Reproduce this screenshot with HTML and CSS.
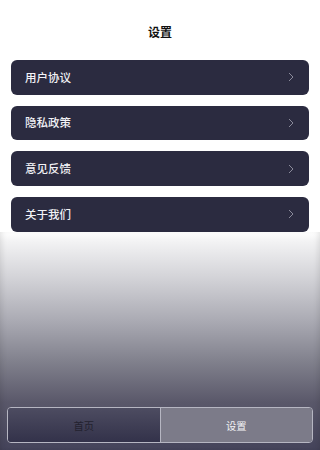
FILE: index.html
```html
<!DOCTYPE html>
<html lang="zh">
<head>
<meta charset="utf-8">
<meta name="viewport" content="width=device-width, initial-scale=1">
<title>设置</title>
<link rel="stylesheet" href="styles.css">
</head>
<body>
<div class="page">
  <header class="header"><h1 class="title">设置</h1></header>
  <ul class="menu">
    <li class="item"><span class="label">用户协议</span><svg class="chev" viewBox="0 0 6 10" width="6" height="10"><path d="M1 1 L5 5 L1 9" fill="none" stroke="#8a8a9a" stroke-width="1"/></svg></li>
    <li class="item"><span class="label">隐私政策</span><svg class="chev" viewBox="0 0 6 10" width="6" height="10"><path d="M1 1 L5 5 L1 9" fill="none" stroke="#8a8a9a" stroke-width="1"/></svg></li>
    <li class="item"><span class="label">意见反馈</span><svg class="chev" viewBox="0 0 6 10" width="6" height="10"><path d="M1 1 L5 5 L1 9" fill="none" stroke="#8a8a9a" stroke-width="1"/></svg></li>
    <li class="item"><span class="label">关于我们</span><svg class="chev" viewBox="0 0 6 10" width="6" height="10"><path d="M1 1 L5 5 L1 9" fill="none" stroke="#8a8a9a" stroke-width="1"/></svg></li>
  </ul>
  <div class="bottom">
    <nav class="tabbar">
      <div class="tab tab-home">首页</div>
      <div class="tab tab-active">设置</div>
    </nav>
  </div>
</div>
</body>
</html>
```
FILE: styles.css
```css
* { box-sizing: border-box; }
html, body { margin: 0; padding: 0; }
body {
  font-family: "Noto Sans CJK SC", "Noto Sans", sans-serif;
  background: #fff;
}
.page {
  width: 100%;
  height: 100vh;
  min-height: 450px;
  display: flex;
  flex-direction: column;
}
.header {
  height: 60px;
  padding-top: 4px;
  display: flex;
  align-items: center;
  justify-content: center;
}
.title {
  margin: 0;
  font-size: 12px;
  font-weight: 700;
  color: #111;
  line-height: 1;
}
.menu {
  list-style: none;
  margin: 0;
  padding: 0 11px;
  display: flex;
  flex-direction: column;
  gap: 11.2px;
}
.item {
  height: 34.5px;
  background: #2b2b40;
  border-radius: 6px;
  display: flex;
  align-items: center;
  justify-content: space-between;
  padding: 0 15px 0 14px;
}
.label {
  color: #f2f2f6;
  font-size: 11.5px;
  font-weight: 500;
  line-height: 1;
}
.chev { display: block; }
.bottom {
  flex: 1;
  display: flex;
  align-items: flex-end;
  padding: 0 7px 7px;
  background: linear-gradient(to bottom, #ffffff 0px, #f2f2f3 10px, #cfcfd4 50px, #a9a9b2 90px, #80808c 130px, #5a586a 170px, #44435a 219px);
  box-shadow: inset 5px 0 6px -4px rgba(0,0,0,0.12), inset -5px 0 6px -4px rgba(0,0,0,0.12);
}
.tabbar {
  width: 100%;
  height: 36px;
  display: flex;
  border: 1px solid #b6b6c2;
  border-radius: 4px;
  overflow: hidden;
}
.tab {
  flex: 1;
  display: flex;
  align-items: center;
  justify-content: center;
  font-size: 10.3px;
}
.tab-home {
  background: linear-gradient(to bottom, #4d4c61, #33324a);
  color: #23222f;
}
.tab-active {
  background: #7c7b89;
  color: #f2f2f4;
  border-left: 1px solid #b6b6c2;
}
```
